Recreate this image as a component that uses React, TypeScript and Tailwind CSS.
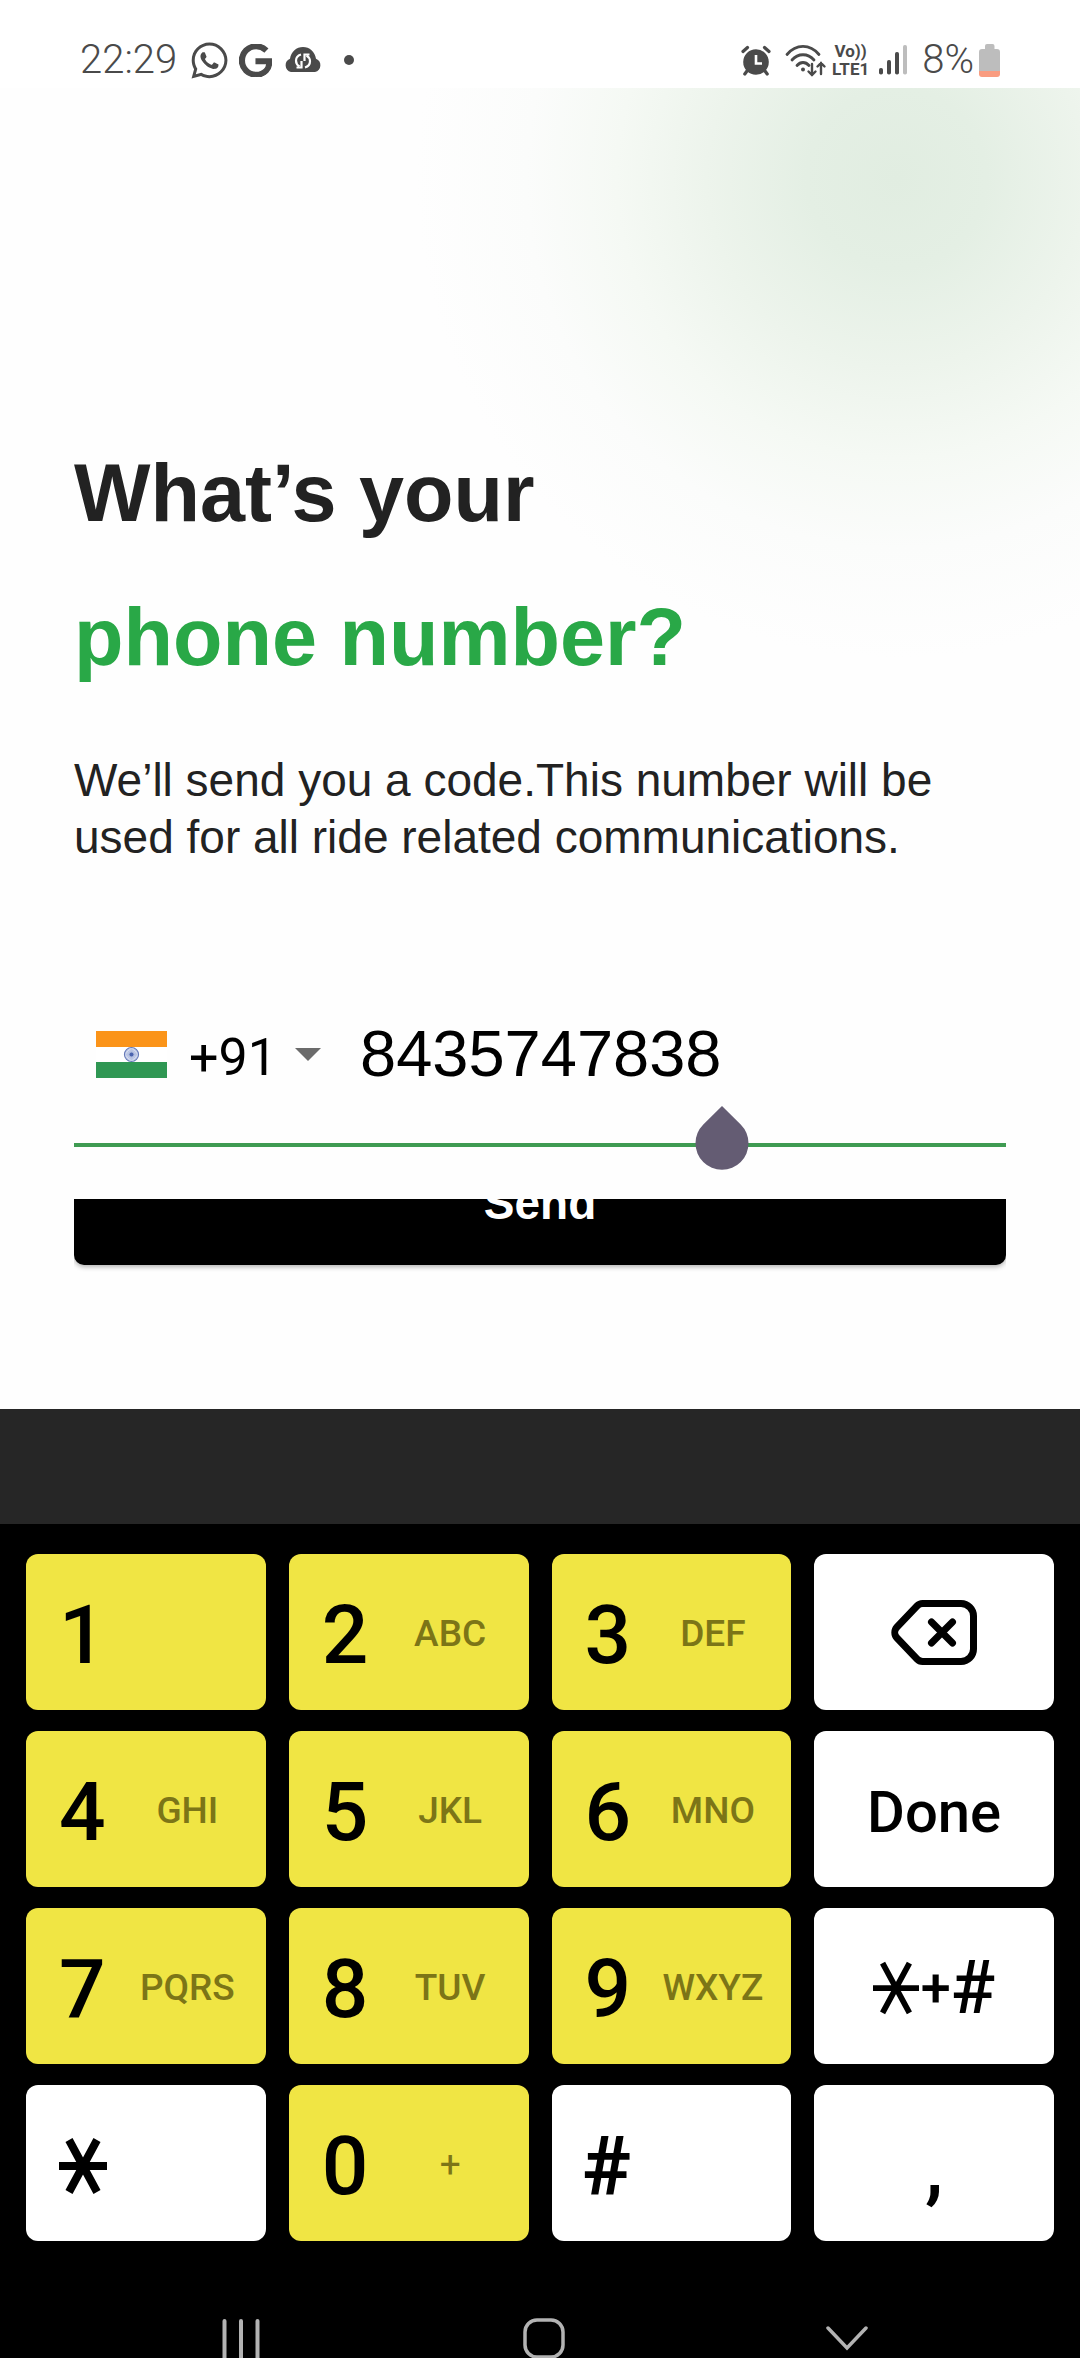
import { useState } from "react";
import { FaWhatsapp } from "react-icons/fa";

function GoogleIcon() {
  return (
    <svg viewBox="0 0 24 24" className="h-[33px] w-[33px]" fill="currentColor" aria-hidden="true">
      <path d="M12.48 10.92v3.28h7.84c-.24 1.84-.853 3.187-1.787 4.133-1.147 1.147-2.933 2.4-6.053 2.4-4.827 0-8.6-3.893-8.6-8.72s3.773-8.72 8.6-8.72c2.6 0 4.507 1.027 5.907 2.347l2.307-2.307C18.747 1.44 16.133 0 12.48 0 5.867 0 .307 5.387.307 12s5.56 12 12.173 12c3.573 0 6.267-1.173 8.373-3.36 2.16-2.16 2.84-5.213 2.84-7.667 0-.76-.053-1.467-.173-2.053H12.48z" stroke="currentColor" strokeWidth="1" />
    </svg>
  );
}

function CloudSyncIcon() {
  return (
    <svg viewBox="0 0 38 26" className="h-[26px] w-[38px]" aria-hidden="true">
      <path d="M7 25a7 7 0 0 1-1-13.3C7 4.600 12.500 0 19 0s12 4.600 13 11.700A7 7 0 0 1 31 25z" fill="currentColor" />
      <g fill="none" stroke="#fff" strokeWidth="2.200">
        <path d="M17 7.500c-3.500 1-5 3.500-5 6.200 0 2.500 1.300 4.500 3.500 5.800" />
        <path d="M17.500 14v6.500h-5" />
        <path d="M21 20.500c3.500-1 5-3.500 5-6.200 0-2.500-1.300-4.500-3.500-5.800" />
        <path d="M20.500 14V7.500h5" />
      </g>
    </svg>
  );
}

function AlarmIcon() {
  return (
    <svg viewBox="0 0 30 31" className="h-[31px] w-[30px]" aria-hidden="true">
      <circle cx="15" cy="17" r="12.800" fill="currentColor" />
      <g fill="none" stroke="currentColor" strokeWidth="3.200" strokeLinecap="round">
        <path d="M2 6.500 6.500 2.500M28 6.500 23.500 2.500M6 26 3.800 29M24 26l2.200 3" />
      </g>
      <path d="M15 10v8.500h6" fill="none" stroke="#fff" strokeWidth="2.600" />
    </svg>
  );
}

function WifiIcon() {
  return (
    <svg viewBox="0 0 42 33" className="h-[33px] w-[42px]" fill="none" stroke="currentColor" strokeWidth="2.800" strokeLinecap="round" aria-hidden="true">
      <path d="M2 10.500C11-.300 25-.300 34 10.500" />
      <path d="M7 16c6-7 16-7 22 0" />
      <path d="M12 21.500c3.500-4 8.500-4 12 0" />
      <circle cx="18" cy="25.500" r="2" fill="currentColor" stroke="none" />
      <path d="M27 20v11M23.500 27.500 27 31l3.500-3.500" strokeWidth="2.400" />
      <path d="M36 30V19M32.500 22.500 36 19l3.500 3.500" strokeWidth="2.400" />
    </svg>
  );
}

function SignalIcon() {
  return (
    <svg viewBox="0 0 28 30" className="h-[30px] w-[28px]" fill="currentColor" aria-hidden="true">
      <rect x="0" y="23" width="4" height="6.500" rx="1.800" />
      <rect x="8" y="15" width="4" height="14.500" rx="1.800" />
      <rect x="16" y="7" width="4" height="22.500" rx="1.800" />
      <rect x="24" y="0" width="4" height="29.500" rx="1.800" fill="#bdbdbd" />
    </svg>
  );
}

function BatteryIcon() {
  return (
    <svg viewBox="0 0 21 33" className="h-[33px] w-[21px]" aria-hidden="true">
      <path d="M6 5V2a2 2 0 0 1 2-2h5.500a2 2 0 0 1 2 2v3H18a3 3 0 0 1 3 3v19H0V8a3 3 0 0 1 3-3z" fill="#bdbdbd" />
      <path d="M0 27h21v3a3 3 0 0 1-3 3H3a3 3 0 0 1-3-3z" fill="#f99c80" />
    </svg>
  );
}

function StatusBar() {
  return (
    <header className="flex h-[88px] items-center justify-between bg-white px-20 pt-8 font-['Roboto',sans-serif] text-[#4a4a4a]">
      <div className="flex items-center">
        <span className="text-[40px] leading-[30px] font-light">22:29</span>
        <FaWhatsapp className="ml-3 size-[41px]" aria-hidden="true" />
        <span className="ml-[9px]"><GoogleIcon /></span>
        <span className="ml-3"><CloudSyncIcon /></span>
        <span className="ml-[22px] size-[10px] rounded-full bg-[#4a4a4a]" />
      </div>
      <div className="flex items-center">
        <AlarmIcon />
        <span className="ml-[14px]"><WifiIcon /></span>
        <span className="ml-[5px] flex flex-col items-center text-[17px] leading-[18px] font-bold">
          <span>Vo))</span>
          <span>LTE1</span>
        </span>
        <span className="ml-[10px]"><SignalIcon /></span>
        <span className="ml-[15px] text-[40px] leading-[30px] font-light">8%</span>
        <span className="ml-[5px]"><BatteryIcon /></span>
      </div>
    </header>
  );
}

function IndiaFlag() {
  const spokes = Array.from({ length: 12 }, (_, i) => i * 15);
  return (
    <svg viewBox="0 0 71 47" className="h-[47px] w-[71px]" role="img" aria-label="India">
      <rect width="71" height="16" fill="#fb9419" />
      <rect y="16" width="71" height="15" fill="#fff" />
      <rect y="31" width="71" height="16" fill="#2f9753" />
      <circle cx="35.500" cy="23.500" r="7" fill="#e3e8f5" stroke="#6478b8" strokeWidth="1.200" />
      {spokes.map((a) => (
        <path key={a} d="M29.500 23.500h12" stroke="#8fa0d0" strokeWidth="0.500" transform={`rotate(${a} 35.500 23.500)`} />
      ))}
      <circle cx="35.500" cy="23.500" r="2" fill="#4a63ae" />
    </svg>
  );
}

function AsteriskIcon({ className, stroke }: { className: string; stroke: number }) {
  return (
    <svg viewBox="0 0 48 56" className={className} stroke="currentColor" strokeWidth={stroke} aria-hidden="true">
      <path d="M0 28h48M10 2l28 52M38 2 10 54" />
    </svg>
  );
}

function BackspaceIcon() {
  return (
    <svg viewBox="0 0 86 65" className="h-[65px] w-[86px]" fill="none" stroke="currentColor" strokeWidth="7" strokeLinejoin="round" strokeLinecap="round" aria-hidden="true">
      <path d="M32 3.500H70A12.500 12.500 0 0 1 82.500 16V49A12.500 12.500 0 0 1 70 61.500H32a8 8 0 0 1-6-2.500L6 38a8 8 0 0 1 0-11L26 6a8 8 0 0 1 6-2.500z" />
      <path d="M40.500 22 61.500 43M61.500 22 40.500 43" />
    </svg>
  );
}

const keyBase = "flex h-[156px] items-center rounded-xl text-black";

function DigitKey({ digit, letters }: { digit: string; letters: string }) {
  return (
    <button type="button" className={`${keyBase} bg-[#f0e544] pl-[33px]`}>
      <span className="w-[50px] pt-1.5 text-left text-[82px] leading-[96px]">{digit}</span>
      <span
        className={`flex-1 pt-1 text-center text-[37px] leading-[42px] text-[#7c7517] ${letters === "+" ? "font-normal" : "font-medium"}`}
      >
        {letters}
      </span>
    </button>
  );
}

function Keyboard() {
  return (
    <section aria-label="Keypad" className="bg-black font-['Roboto',sans-serif] font-medium">
      <div className="h-[115px] bg-[#262626]" />
      <div className="grid grid-cols-4 gap-x-[23px] gap-y-[21px] px-[26px] pt-[30px]">
        <DigitKey digit="1" letters="" />
        <DigitKey digit="2" letters="ABC" />
        <DigitKey digit="3" letters="DEF" />
        <button type="button" aria-label="Backspace" className={`${keyBase} justify-center bg-white`}>
          <BackspaceIcon />
        </button>
        <DigitKey digit="4" letters="GHI" />
        <DigitKey digit="5" letters="JKL" />
        <DigitKey digit="6" letters="MNO" />
        <button type="button" className={`${keyBase} justify-center bg-white pt-1.5 text-[58px]`}>Done</button>
        <DigitKey digit="7" letters="PQRS" />
        <DigitKey digit="8" letters="TUV" />
        <DigitKey digit="9" letters="WXYZ" />
        <button type="button" aria-label="Symbols *+#" className={`${keyBase} justify-center bg-white pt-1`}>
          <AsteriskIcon className="h-[54px] w-[46px]" stroke={6} />
          <span className="ml-0.5 text-[54px] leading-[64px]">+</span>
          <span className="text-[74px] leading-[88px]">#</span>
        </button>
        <button type="button" aria-label="*" className={`${keyBase} bg-white pt-1.5 pl-[33px]`}>
          <AsteriskIcon className="h-14 w-12" stroke={8} />
        </button>
        <DigitKey digit="0" letters="+" />
        <button type="button" className={`${keyBase} bg-white pt-1.5 pl-[31px] text-[82px] leading-[96px] font-bold`}>#</button>
        <button type="button" className={`${keyBase} justify-center bg-white pt-1.5 text-[82px] leading-[96px]`}>,</button>
      </div>
      <nav aria-label="System" className="grid grid-cols-3 justify-items-center pt-[77px] pr-[82px] pl-[90px] text-[#b3b3b3]">
        <button type="button" aria-label="Recent apps">
          <svg viewBox="0 0 40 40" className="size-10" stroke="currentColor" strokeWidth="4" strokeLinecap="round" aria-hidden="true">
            <path d="M3.500 3v42M20 3v42M36.500 3v42" />
          </svg>
        </button>
        <button type="button" aria-label="Home">
          <svg viewBox="0 0 42 40" className="h-10 w-[42px]" fill="none" stroke="currentColor" strokeWidth="3.500" aria-hidden="true">
            <rect x="2" y="2" width="38" height="37" rx="12" />
          </svg>
        </button>
        <button type="button" aria-label="Hide keyboard">
          <svg viewBox="0 0 42 40" className="h-10 w-[42px]" fill="none" stroke="currentColor" strokeWidth="3.500" strokeLinecap="round" aria-hidden="true">
            <path d="M2 10 21 30 40 10" />
          </svg>
        </button>
      </nav>
    </section>
  );
}

export default function App() {
  const [phone, setPhone] = useState("8435747838");
  return (
    <div className="w-full overflow-hidden bg-white">
      <StatusBar />
      <main className="bg-[radial-gradient(circle_at_83%_90px,#e1ede1_0px,#e4efe4_90px,#edf4ec_190px,#f5f9f4_280px,#fbfcfb_370px,#fefefe_480px,#fefefe_100%)] px-[74px] pt-[333px] pb-[136px] font-['Liberation_Sans',Arial,sans-serif]">
        <h1 className="text-[81px] leading-[144px] font-bold text-[#222222]">
          What’s your
          <span className="block text-[#29a847]">phone number?</span>
        </h1>
        <p className="mt-[43px] text-[46px] leading-[57px] text-[#222222]">
          We’ll send you a code.This number will be used for all ride related communications.
        </p>
        <form onSubmit={(e) => e.preventDefault()}>
          <div className="relative mt-[143px] border-b-4 border-[#3f9b52] pb-11">
            <div className="flex h-[90px] items-center pl-[22px]">
              <IndiaFlag />
              <div className="relative ml-[22px] flex items-center">
                <select
                  aria-label="Country code"
                  className="w-[132px] appearance-none bg-transparent pt-2 font-['Roboto',sans-serif] text-[52px] leading-[60px] text-black outline-none"
                >
                  <option>+91</option>
                </select>
                <svg viewBox="0 0 26 13" className="pointer-events-none absolute right-0 h-[13px] w-[26px]" fill="#6b6b6b" aria-hidden="true">
                  <path d="M0 0h26L13 13z" />
                </svg>
              </div>
              <input
                type="tel"
                aria-label="Phone number"
                value={phone}
                onChange={(e) => setPhone(e.target.value)}
                className="ml-[39px] min-w-0 flex-1 bg-transparent text-[65px] leading-[74px] text-black outline-none"
              />
            </div>
            <svg viewBox="0 0 54 64" className="absolute top-[97px] left-[621px] h-16 w-[54px]" fill="#645c73" aria-hidden="true">
              <path d="M27 0 45.700 18.500A26.500 26.500 0 1 1 8.300 18.500z" />
            </svg>
          </div>
          <div className="mt-[52px] flex h-[74px] flex-col justify-end overflow-hidden pb-2">
            <button type="submit" className="h-[126px] w-full shrink-0 rounded-[10px] bg-black pt-0.5 text-[46px] font-bold text-white shadow-[0_2px_5px_rgba(0,0,0,0.3)]">
              Send
            </button>
          </div>
        </form>
      </main>
      <Keyboard />
    </div>
  );
}
